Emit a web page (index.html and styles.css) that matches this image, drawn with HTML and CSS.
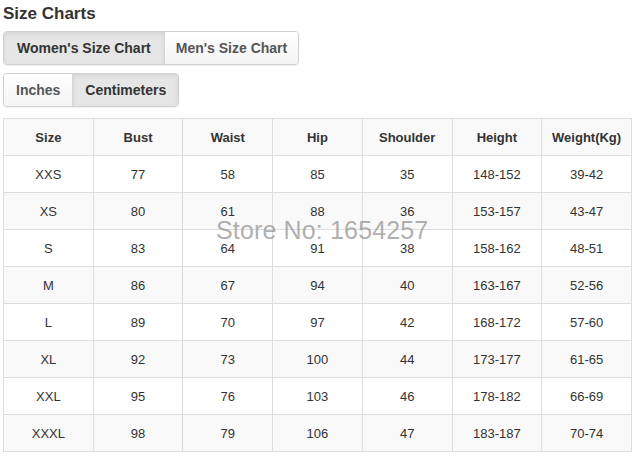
FILE: index.html
```html
<!DOCTYPE html>
<html>
<head>
<meta charset="utf-8">
<link rel="stylesheet" href="styles.css">
</head>
<body>
<div class="page">
  <h2 class="title">Size Charts</h2>
  <div class="btn-group g1">
    <span class="btn active">Women's Size Chart</span>
    <span class="btn">Men's Size Chart</span>
  </div>
  <div class="btn-group g2">
    <span class="btn">Inches</span>
    <span class="btn active">Centimeters</span>
  </div>
  <div class="table-wrap">
    <table class="chart">
      <thead>
        <tr><th>Size</th><th>Bust</th><th>Waist</th><th>Hip</th><th>Shoulder</th><th>Height</th><th>Weight(Kg)</th></tr>
      </thead>
      <tbody>
        <tr><td>XXS</td><td>77</td><td>58</td><td>85</td><td>35</td><td>148-152</td><td>39-42</td></tr>
        <tr><td>XS</td><td>80</td><td>61</td><td>88</td><td>36</td><td>153-157</td><td>43-47</td></tr>
        <tr><td>S</td><td>83</td><td>64</td><td>91</td><td>38</td><td>158-162</td><td>48-51</td></tr>
        <tr><td>M</td><td>86</td><td>67</td><td>94</td><td>40</td><td>163-167</td><td>52-56</td></tr>
        <tr><td>L</td><td>89</td><td>70</td><td>97</td><td>42</td><td>168-172</td><td>57-60</td></tr>
        <tr><td>XL</td><td>92</td><td>73</td><td>100</td><td>44</td><td>173-177</td><td>61-65</td></tr>
        <tr><td>XXL</td><td>95</td><td>76</td><td>103</td><td>46</td><td>178-182</td><td>66-69</td></tr>
        <tr><td>XXXL</td><td>98</td><td>79</td><td>106</td><td>47</td><td>183-187</td><td>70-74</td></tr>
      </tbody>
    </table>
    <div class="watermark">Store No: 1654257</div>
  </div>
</div>
</body>
</html>
```
FILE: styles.css
```css
html, body {
  margin: 0;
  padding: 0;
  background: #fff;
}
body {
  font-family: "Liberation Sans", Arial, sans-serif;
  color: #333;
}
.page {
  padding: 4px 8px 0 3px;
}
.title {
  margin: 0;
  font-size: 17px;
  font-weight: bold;
  line-height: 20px;
  color: #333;
}
.btn-group {
  display: flex;
  width: max-content;
  border: 1px solid #cfcfcf;
  border-radius: 4px;
  overflow: hidden;
  box-shadow: 0 1px 1px rgba(0,0,0,0.06);
}
.g1 { margin-top: 7px; }
.g2 { margin-top: 8px; }
.btn {
  display: block;
  font-size: 14px;
  font-weight: bold;
  line-height: 17px;
  padding: 8px 11px 7px 11px;
  color: #555;
  background: linear-gradient(#ffffff, #f4f4f4);
}
.btn + .btn {
  border-left: 1px solid #d6d6d6;
}
.btn.active {
  color: #333;
  background: #e6e6e6;
  box-shadow: inset 0 2px 4px rgba(0,0,0,0.08);
}
.g1 .btn:first-child { padding-left: 13px; padding-right: 13px; }
.g2 .btn:first-child { padding-left: 12px; padding-right: 12px; }
.g2 .btn:last-child { padding-left: 12px; padding-right: 12px; }
.table-wrap {
  position: relative;
  margin-top: 11px;
  width: 629px;
}
.chart {
  width: 629px;
  border-collapse: collapse;
  table-layout: fixed;
  border: 1px solid #ddd;
}
.chart th, .chart td {
  border: 1px solid #ddd;
  height: 36px;
  padding: 0;
  text-align: center;
  vertical-align: middle;
  font-size: 13px;
  color: #333;
}
.chart th {
  font-weight: bold;
  background: #f9f9f9;
}
.chart tbody tr:nth-child(even) td {
  background: #f9f9f9;
}
.watermark {
  position: absolute;
  left: 213px;
  top: 98px;
  font-size: 25px;
  letter-spacing: 0.15px;
  color: rgba(150,150,150,0.75);
  white-space: nowrap;
  pointer-events: none;
}
```
